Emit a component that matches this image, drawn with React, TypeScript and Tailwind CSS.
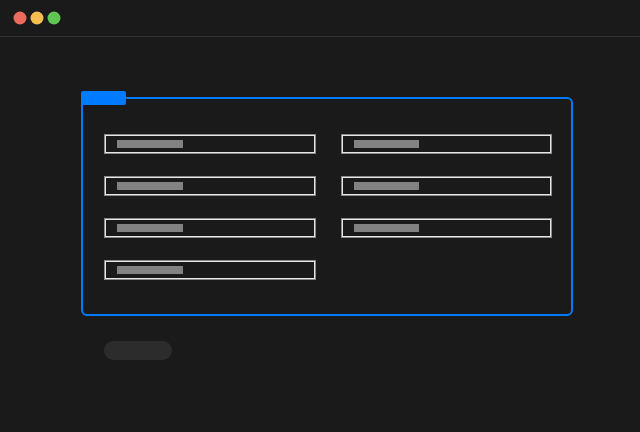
function Field({ short }: { short?: boolean }) {
  return (
    <div className="m-px flex h-[18px] items-center border border-[#e6e6e6] pl-[11px] ring-1 ring-[#8a8a8a]">
      <div className={short ? "h-2 w-[65px] bg-[#828282]" : "h-2 w-[66px] bg-[#828282]"} />
    </div>
  );
}

export default function App() {
  return (
    <div className="h-[432px] w-[640px] overflow-hidden bg-[#1a1a1a]">
      <header className="flex h-[37px] items-center gap-[5px] border-b border-[#333333] pl-[14px]">
        <span className="size-3 scale-[1.08] rounded-full bg-[#ed6a5e]" />
        <span className="size-3 scale-[1.08] rounded-full bg-[#f5bf4f]" />
        <span className="size-3 scale-[1.08] rounded-full bg-[#61c554]" />
      </header>

      <main className="pl-[81px] pt-[60px]">
        <section className="relative h-[219px] w-[492px] rounded-md border-2 border-[#007af5] pl-[21px] pt-[35px]">
          <div className="absolute -left-[2px] -top-2 h-[14px] w-[45px] rounded-[2px] bg-[#007aff]" />
          <div className="grid grid-cols-[212px_211px] gap-x-[25px] gap-y-[22px]">
            <Field />
            <Field short />
            <Field />
            <Field short />
            <Field />
            <Field short />
            <Field />
          </div>
        </section>

        <div className="ml-[23px] mt-[25px] h-[19px] w-[68px] rounded-[10px] bg-[#2c2c2c]" />
      </main>
    </div>
  );
}
